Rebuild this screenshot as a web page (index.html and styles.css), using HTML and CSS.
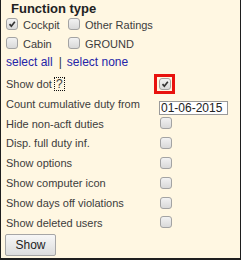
FILE: index.html
```html
<!DOCTYPE html>
<html lang="en">
<head>
  <meta charset="UTF-8" />
  <title>Function type</title>
  <link rel="stylesheet" href="styles.css">
</head>
<body>
  <div class="panel">
    <div class="title">Function type</div>
    <div class="types">
      <label class="type"><span class="box checked"><svg viewBox="0 0 12 12"><path d="M3 6.2 L5.2 8.6 L9.4 3.4" /></svg></span>Cockpit</label>
      <label class="type"><span class="box"></span>Other Ratings</label>
      <label class="type"><span class="box"></span>Cabin</label>
      <label class="type"><span class="box"></span>GROUND</label>
    </div>
    <div class="select-links">
      <a href="#">select all</a><span class="sep">|</span><a href="#">select none</a>
    </div>
    <div class="options">
      <div class="label">Show dot<span class="help">?</span></div>
      <div class="control"><span class="marked"><span class="box checked"><svg viewBox="0 0 12 12"><path d="M3 6.2 L5.2 8.6 L9.4 3.4" /></svg></span></span></div>

      <div class="label">Count cumulative duty from</div>
      <div class="control"><input class="date" type="text" value="01-06-2015" /></div>

      <div class="label">Hide non-acft duties</div>
      <div class="control"><span class="box"></span></div>

      <div class="label">Disp. full duty inf.</div>
      <div class="control"><span class="box"></span></div>

      <div class="label">Show options</div>
      <div class="control"><span class="box"></span></div>

      <div class="label">Show computer icon</div>
      <div class="control"><span class="box"></span></div>

      <div class="label">Show days off violations</div>
      <div class="control"><span class="box"></span></div>

      <div class="label">Show deleted users</div>
      <div class="control"><span class="box"></span></div>
    </div>
    <button class="show-button">Show</button>
  </div>
</body>
</html>
```

FILE: styles.css
```css
body {
  margin: 0;
  font-family: "Liberation Sans", Arial, sans-serif;
}
.panel {
  box-sizing: border-box;
  width: 241px;
  height: 260px;
  padding: 1px 5px 0;
  background: #fff7e2;
  border-left: 1px solid #1e1e1e;
  border-right: 1px solid #1e1e1e;
  border-bottom: 2px solid #1e1e1e;
  color: #3c3c3c;
  font-size: 11px;
}
.title {
  font-size: 13px;
  font-weight: bold;
  line-height: 15px;
  color: #222;
  padding-left: 5px;
}
.types {
  display: grid;
  grid-template-columns: 62px auto;
  grid-auto-rows: 19px;
}
.type {
  display: flex;
  align-items: center;
  line-height: 19px;
}
.type .box {
  margin-right: 5px;
  margin-bottom: 4px;
}
.box {
  box-sizing: border-box;
  display: inline-block;
  width: 12px;
  height: 12px;
  border: 1px solid #a3a3a3;
  border-radius: 3px;
  background: linear-gradient(#f2f2f2, #d9d9d9);
  flex-shrink: 0;
}
.box svg {
  display: block;
  width: 10px;
  height: 10px;
}
.box path {
  fill: none;
  stroke: #333;
  stroke-width: 2;
}
.marked {
  display: flex;
  margin-left: -6px;
  padding: 1px 1px 1px 2px;
  border: 3px solid #e8120e;
}
.select-links {
  font-size: 12px;
  line-height: 16px;
}
.select-links a {
  color: #2424a8;
  text-decoration: none;
}
.sep {
  color: #333;
  margin: 0 5px 0 6px;
}
.options {
  margin-top: 4px;
  display: grid;
  grid-template-columns: 154px auto;
  grid-auto-rows: 19.8px;
}
.label {
  line-height: 20px;
  white-space: nowrap;
}
.help {
  display: inline-block;
  margin-left: 2px;
  padding: 0 1px;
  line-height: 12px;
  font-size: 12px;
  border: 1px dotted #111;
  color: #3c3c3c;
}
.control {
  display: flex;
  align-items: center;
}
.date {
  box-sizing: border-box;
  align-self: flex-start;
  margin: 7px 0 0 -1px;
  width: 69px;
  height: 14px;
  padding: 0 1px;
  border: 1px solid #9a9a9a;
  font-family: "Liberation Sans", Arial, sans-serif;
  font-size: 12px;
  color: #222;
  background: #fff;
}
.show-button {
  margin: 2px 0 0 -1px;
  width: 51px;
  height: 22px;
  padding: 0;
  border: 1px solid #a6a6a6;
  border-radius: 2px;
  background: linear-gradient(#f7f7f7, #dcdcdc);
  font-family: "Liberation Sans", Arial, sans-serif;
  font-size: 12px;
  color: #222;
}
```
